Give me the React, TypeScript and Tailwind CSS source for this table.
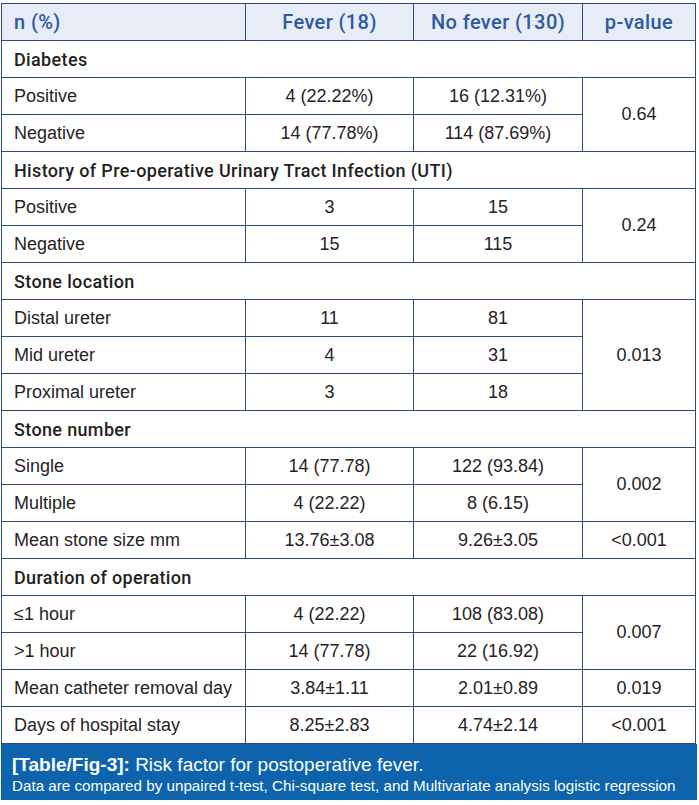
type Row =
  | { kind: "section"; label: string }
  | { kind: "data"; label: string; fever: string; noFever: string; p?: string; span?: number };

const rows: Row[] = [
  { kind: "section", label: "Diabetes" },
  { kind: "data", label: "Positive", fever: "4 (22.22%)", noFever: "16 (12.31%)", p: "0.64", span: 2 },
  { kind: "data", label: "Negative", fever: "14 (77.78%)", noFever: "114 (87.69%)" },
  { kind: "section", label: "History of Pre-operative Urinary Tract Infection (UTI)" },
  { kind: "data", label: "Positive", fever: "3", noFever: "15", p: "0.24", span: 2 },
  { kind: "data", label: "Negative", fever: "15", noFever: "115" },
  { kind: "section", label: "Stone location" },
  { kind: "data", label: "Distal ureter", fever: "11", noFever: "81", p: "0.013", span: 3 },
  { kind: "data", label: "Mid ureter", fever: "4", noFever: "31" },
  { kind: "data", label: "Proximal ureter", fever: "3", noFever: "18" },
  { kind: "section", label: "Stone number" },
  { kind: "data", label: "Single", fever: "14 (77.78)", noFever: "122 (93.84)", p: "0.002", span: 2 },
  { kind: "data", label: "Multiple", fever: "4 (22.22)", noFever: "8 (6.15)" },
  { kind: "data", label: "Mean stone size mm", fever: "13.76±3.08", noFever: "9.26±3.05", p: "<0.001", span: 1 },
  { kind: "section", label: "Duration of operation" },
  { kind: "data", label: "≤1 hour", fever: "4 (22.22)", noFever: "108 (83.08)", p: "0.007", span: 2 },
  { kind: "data", label: ">1 hour", fever: "14 (77.78)", noFever: "22 (16.92)" },
  { kind: "data", label: "Mean catheter removal day", fever: "3.84±1.11", noFever: "2.01±0.89", p: "0.019", span: 1 },
  { kind: "data", label: "Days of hospital stay", fever: "8.25±2.83", noFever: "4.74±2.14", p: "<0.001", span: 1 },
];

const cell = "border border-[#2f4a7c] align-middle p-0";
const head = "font-['Roboto',Arial,sans-serif] font-medium text-[20px] tracking-[0.4px]";

export default function App() {
  return (
    <div className="w-[699px] h-[805px] bg-white pt-[3px] pl-[1px] font-['Liberation_Sans',Arial,sans-serif] text-[18px] text-[#262324]">
      <div className="w-[696px]">
        <table className="w-[694px] table-fixed border-collapse">
          <colgroup>
            <col className="w-[244px]" />
            <col className="w-[168px]" />
            <col className="w-[169px]" />
            <col className="w-[113px]" />
          </colgroup>
          <thead>
            <tr className="h-[37px] bg-[#e8ecf6] text-[#2d5a9e]">
              <th className={`${cell} ${head} text-left pl-3`}>n (%)</th>
              <th className={`${cell} ${head} text-center`}>Fever (18)</th>
              <th className={`${cell} ${head} text-center`}>No fever (130)</th>
              <th className={`${cell} ${head} text-center`}>p-value</th>
            </tr>
          </thead>
          <tbody>
            {rows.map((r, i) =>
              r.kind === "section" ? (
                <tr key={i} className="h-[37px]">
                  <td colSpan={4} className={`${cell} pl-3 font-['Roboto',Arial,sans-serif] font-medium tracking-[0.35px] text-[#231f20]`}>
                    {r.label}
                  </td>
                </tr>
              ) : (
                <tr key={i} className="h-[37px]">
                  <td className={`${cell} pl-3`}>{r.label}</td>
                  <td className={`${cell} text-center`}>{r.fever}</td>
                  <td className={`${cell} text-center`}>{r.noFever}</td>
                  {r.p && (
                    <td rowSpan={r.span} className={`${cell} text-center`}>
                      {r.p}
                    </td>
                  )}
                </tr>
              )
            )}
          </tbody>
        </table>
        <div className="bg-[#0d64ad] text-white pl-[11px] pr-2 pt-[10px] pb-[4px] whitespace-nowrap">
          <div className="text-[19px] leading-[22px]">
            <span className="font-bold">[Table/Fig-3]:</span> Risk factor for postoperative fever.
          </div>
          <div className="text-[15.2px] leading-[20px]">
            Data are compared by unpaired t-test, Chi-square test, and Multivariate analysis logistic regression
          </div>
        </div>
      </div>
    </div>
  );
}
